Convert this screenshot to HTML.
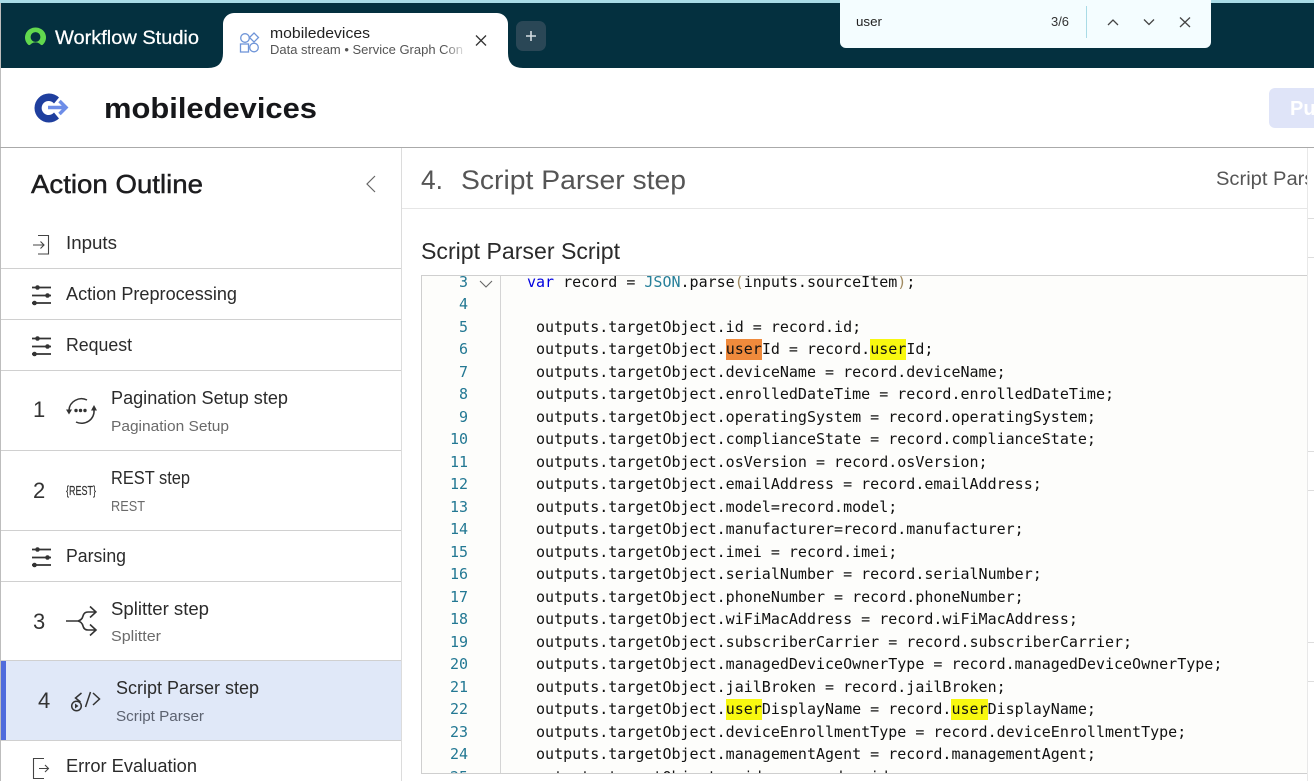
<!DOCTYPE html>
<html><head><meta charset="utf-8"><style>
html,body{margin:0;padding:0;width:1314px;height:781px;overflow:hidden;background:#fff}
.a{position:absolute}
#ed{position:absolute;left:421px;top:275px;width:886px;height:499px;overflow:hidden;background:#fdfdfb;border:1px solid #cfcfcf;border-width:1px 0 1px 1px;box-sizing:border-box}
#gut{position:absolute;left:78px;top:0;width:1px;height:100%;background:#d4d4d4}
pre{position:absolute;margin:0;font:15px/22.48px "DejaVu Sans Mono","Liberation Mono",monospace;top:-5px}
#nums{left:0;width:46px;text-align:right;color:#237893}
#code{left:105px;color:#111}
#code b{font-weight:normal;display:inline-block;height:21px;line-height:21px;background:#f8f810;vertical-align:top;margin-top:.7px}
#code b.o{background:#ef8a3c}
svg text{font-family:"Liberation Sans",Arial,sans-serif;white-space:pre}
</style></head><body>
<div class="a" style="left:0;top:0;width:1314px;height:68px;background:#04303f"></div>
<div class="a" style="left:0;top:0;width:1314px;height:3px;background:#a9dbe6"></div>
<div class="a" style="left:0;top:3px;width:1px;height:778px;background:#bdbdbd"></div>
<div class="a" style="left:223px;top:13px;width:285px;height:55px;background:#fff;border-radius:11px 11px 0 0"></div>
<div class="a" style="left:516px;top:21px;width:30px;height:30px;background:#2a4756;border-radius:7px"></div>
<div class="a" style="left:1269px;top:88px;width:45px;height:40px;background:#dfe4f8;border-radius:6px 0 0 6px"></div>
<div class="a" style="left:0;top:147px;width:1314px;height:1px;background:#aaa"></div>
<div class="a" style="left:401px;top:148px;width:1px;height:633px;background:#dcdcdc"></div>
<div class="a" style="left:402px;top:208px;width:905px;height:1px;background:#e6e6e6"></div>
<div class="a" style="left:1307px;top:148px;width:1px;height:633px;background:#e8e8e8"></div>
<div class="a" style="left:1px;top:661px;width:400px;height:79px;background:#e0e8f8"></div>
<div class="a" style="left:1px;top:661px;width:5px;height:79px;background:#4f6bdc"></div>
<div class="a" style="left:1px;top:268px;width:400px;height:1px;background:#d0d0d0"></div>
<div class="a" style="left:1px;top:319px;width:400px;height:1px;background:#d0d0d0"></div>
<div class="a" style="left:1px;top:370px;width:400px;height:1px;background:#d0d0d0"></div>
<div class="a" style="left:1px;top:450px;width:400px;height:1px;background:#d0d0d0"></div>
<div class="a" style="left:1px;top:530px;width:400px;height:1px;background:#d0d0d0"></div>
<div class="a" style="left:1px;top:581px;width:400px;height:1px;background:#d0d0d0"></div>
<div class="a" style="left:1px;top:660px;width:400px;height:1px;background:#d0d0d0"></div>
<div class="a" style="left:1px;top:740px;width:400px;height:1px;background:#d0d0d0"></div>
<div class="a" style="left:1308px;top:218px;width:6px;height:1px;background:#ddd"></div>
<div class="a" style="left:1308px;top:257px;width:6px;height:1px;background:#ddd"></div>
<div class="a" style="left:1308px;top:451px;width:6px;height:1px;background:#ddd"></div>
<div class="a" style="left:1308px;top:490px;width:6px;height:1px;background:#ddd"></div>
<div class="a" style="left:1308px;top:642px;width:6px;height:1px;background:#ddd"></div>
<div class="a" style="left:1308px;top:681px;width:6px;height:1px;background:#ddd"></div>

<div id="ed"><div id="gut"></div>
<pre id="nums">3
4
5
6
7
8
9
10
11
12
13
14
15
16
17
18
19
20
21
22
23
24
25</pre>
<pre id="code"><span style="color:#0000e0">var</span> record = <span style="color:#267f99">JSON</span>.parse<span style="color:#a08a60">(</span>inputs.sourceItem<span style="color:#a08a60">)</span>;

 outputs.targetObject.id = record.id;
 outputs.targetObject.<b class="o">user</b>Id = record.<b>user</b>Id;
 outputs.targetObject.deviceName = record.deviceName;
 outputs.targetObject.enrolledDateTime = record.enrolledDateTime;
 outputs.targetObject.operatingSystem = record.operatingSystem;
 outputs.targetObject.complianceState = record.complianceState;
 outputs.targetObject.osVersion = record.osVersion;
 outputs.targetObject.emailAddress = record.emailAddress;
 outputs.targetObject.model=record.model;
 outputs.targetObject.manufacturer=record.manufacturer;
 outputs.targetObject.imei = record.imei;
 outputs.targetObject.serialNumber = record.serialNumber;
 outputs.targetObject.phoneNumber = record.phoneNumber;
 outputs.targetObject.wiFiMacAddress = record.wiFiMacAddress;
 outputs.targetObject.subscriberCarrier = record.subscriberCarrier;
 outputs.targetObject.managedDeviceOwnerType = record.managedDeviceOwnerType;
 outputs.targetObject.jailBroken = record.jailBroken;
 outputs.targetObject.<b>user</b>DisplayName = record.<b>user</b>DisplayName;
 outputs.targetObject.deviceEnrollmentType = record.deviceEnrollmentType;
 outputs.targetObject.managementAgent = record.managementAgent;
 outputs.targetObject.maid = record.maid;</pre>
</div>

<svg class="a" style="left:0;top:0" width="1314" height="781" viewBox="0 0 1314 781" xmlns="http://www.w3.org/2000/svg">
<defs><linearGradient id="fd"><stop offset=".9" stop-color="#555"/><stop offset="1" stop-color="#ddd"/></linearGradient></defs>
<!-- header -->
<path d="M35.500 27.500a10.500 10 0 0 1 7.500 17q-1.500 1.500-3-.5a6.500 6 0 0 0-9 0q-1.500 2-3 .5a10.500 10 0 0 1 7.500-17z" fill="#62d84e"/>
<circle cx="35.500" cy="37" r="4.900" fill="#04303f"/>
<text x="55" y="44" font-size="19" fill="#fff" stroke="#fff" stroke-width=".25" textLength="144" lengthAdjust="spacingAndGlyphs">Workflow Studio</text>
<path d="M208 68q15 0 15-15v15zM508 53q0 15 15 15h-15z" fill="#fff"/>
<g fill="none" stroke="#6f95d8" stroke-width="1.300"><circle cx="245" cy="38" r="4.300"/><path d="M254 33l4.500 4.500-4.500 4.500-4.500-4.500z"/><rect x="240.500" y="44" width="8" height="8"/><circle cx="254" cy="47.500" r="4.300"/></g>
<text x="270" y="38" font-size="15" fill="#222" textLength="100" lengthAdjust="spacingAndGlyphs">mobiledevices</text>
<text x="270" y="54" font-size="12.500" fill="url(#fd)" textLength="193" lengthAdjust="spacingAndGlyphs">Data stream • Service Graph Con</text>
<path d="M476 35.500l10 10M486 35.500l-10 10" stroke="#333" stroke-width="1.300" fill="none"/>
<path d="M531 31v10M526 36h10" stroke="#d5dde2" stroke-width="1.600" fill="none"/>
<!-- find bar -->
<path d="M840 0h371v42a6 6 0 0 1-6 6H846a6 6 0 0 1-6-6z" fill="#f4fdff"/>
<rect x="1086" y="6" width="1" height="32" fill="#a9dbe6"/>
<text x="856" y="26" font-size="12.500" fill="#222" textLength="26" lengthAdjust="spacingAndGlyphs">user</text>
<text x="1051" y="26" font-size="12.500" fill="#333" textLength="18" lengthAdjust="spacingAndGlyphs">3/6</text>
<g fill="none" stroke="#444" stroke-width="1.300"><path d="M1108 25l5-5 5 5M1144 19.500l5 5 5-5M1180 17.500l10 9.500M1190 17.500l-10 9.500"/></g>
<!-- title -->
<path d="M59 97.500a14.500 14.500 0 1 0 0 21l-5-6a7 7 0 1 1 0-9z" fill="#1f3f9e"/>
<path d="M48 104.500h11v-5l11 8-11 8v-5H48a3.500 3.500 0 0 1 0-6z" fill="#fff"/>
<path d="M48 107.500h18M59.500 101l6.500 6.500-6.500 6.500" fill="none" stroke="#6d8de8" stroke-width="3.500"/>
<text x="104" y="118" font-size="29" font-weight="700" fill="#16171a" textLength="213" lengthAdjust="spacingAndGlyphs">mobiledevices</text>
<text x="1290" y="115" font-size="20" font-weight="700" fill="#fff">Pu</text>
<!-- sidebar -->
<text x="31" y="193" font-size="26" fill="#1d1d1f" stroke="#1d1d1f" stroke-width=".45" textLength="172" lengthAdjust="spacingAndGlyphs">Action Outline</text>
<path d="M375 176l-8 8 8 8" fill="none" stroke="#666" stroke-width="1.200"/>
<g fill="#2b2b2b" font-size="18">
<text x="66" y="249" textLength="51" lengthAdjust="spacingAndGlyphs">Inputs</text>
<text x="66" y="300" textLength="171" lengthAdjust="spacingAndGlyphs">Action Preprocessing</text>
<text x="66" y="351" textLength="66" lengthAdjust="spacingAndGlyphs">Request</text>
<text x="111" y="404" textLength="177" lengthAdjust="spacingAndGlyphs">Pagination Setup step</text>
<text x="111" y="484" textLength="79" lengthAdjust="spacingAndGlyphs">REST step</text>
<text x="66" y="562" textLength="60" lengthAdjust="spacingAndGlyphs">Parsing</text>
<text x="111" y="615" textLength="98" lengthAdjust="spacingAndGlyphs">Splitter step</text>
<text x="116" y="694" textLength="143" lengthAdjust="spacingAndGlyphs">Script Parser step</text>
<text x="66" y="772" textLength="131" lengthAdjust="spacingAndGlyphs">Error Evaluation</text>
</g>
<g fill="#6a6a6a" font-size="15">
<text x="111" y="431" textLength="118" lengthAdjust="spacingAndGlyphs">Pagination Setup</text>
<text x="111" y="511" textLength="34" lengthAdjust="spacingAndGlyphs">REST</text>
<text x="111" y="641" textLength="50" lengthAdjust="spacingAndGlyphs">Splitter</text>
<text x="116" y="721" fill="#5c6270" textLength="88" lengthAdjust="spacingAndGlyphs">Script Parser</text>
</g>
<g fill="#333" font-size="22">
<text x="33" y="417">1</text><text x="33" y="498">2</text><text x="33" y="629">3</text><text x="38" y="708">4</text>
</g>
<!-- sidebar icons -->
<g fill="none" stroke="#444" stroke-width="1.100">
<path d="M33 245h11M40.500 241.500l3.500 3.500-3.500 3.500M38 235.500h10.500v18.500H38"/>
<path d="M44 758.500H33.500v20H44M39 768.500h9M45 765l3.500 3.500-3.500 3.500"/>
</g>
<g fill="none" stroke="#333" stroke-width="1.800">
<path d="M32 287.500h19M32 295.500h19M32 303h19"/><path d="M32 338.500h19M32 346.500h19M32 354h19"/><path d="M32 549.500h19M32 557.500h19M32 565h19"/>
</g>
<g fill="#333">
<circle cx="37.500" cy="287.500" r="2.300"/><circle cx="47.500" cy="295.500" r="2.300"/><circle cx="34.500" cy="303" r="2.300"/>
<circle cx="37.500" cy="338.500" r="2.300"/><circle cx="47.500" cy="346.500" r="2.300"/><circle cx="34.500" cy="354" r="2.300"/>
<circle cx="37.500" cy="549.500" r="2.300"/><circle cx="47.500" cy="557.500" r="2.300"/><circle cx="34.500" cy="565" r="2.300"/>
<circle cx="76" cy="410.500" r="1.700"/><circle cx="80.500" cy="410.500" r="1.700"/><circle cx="85" cy="410.500" r="1.700"/>
<path d="M66 409.500h6l-3 5zM91 410.500h6l-3-5.500z"/>
</g>
<path d="M69 410a12.500 12 0 0 1 18-10M94 410a12.500 12 0 0 1-18 12" fill="none" stroke="#333" stroke-width="1.500"/>
<text x="66" y="495" font-size="13" fill="#333" stroke="#333" stroke-width=".2" textLength="30" lengthAdjust="spacingAndGlyphs">{REST}</text>
<g fill="none" stroke="#333" stroke-width="1.600">
<path d="M66 621h12q4-1 5-5 1-4 5-4h8M78 621q4 1 5 5 1 4 5 4h8M90 606.500l6 5.500-6 5.500M90 624.500l6 5.500-6 5.500"/>
</g>
<g fill="none" stroke="#333" stroke-width="1.500">
<circle cx="76.500" cy="706" r="4.800"/><path d="M81.500 693l-6 5 5 4M90.500 692l-5 15M93 693l6.500 6-6.500 6"/>
</g>
<path d="M75 703.500l3.500 2.500-3.500 2.500z" fill="#333"/>
<!-- content -->
<text x="421" y="189" font-size="27" fill="#555" textLength="22" lengthAdjust="spacingAndGlyphs">4.</text>
<text x="461" y="189" font-size="27" fill="#555" textLength="225" lengthAdjust="spacingAndGlyphs">Script Parser step</text>
<clipPath id="c"><rect x="1200" y="160" width="107" height="40"/></clipPath>
<text x="1216" y="185" font-size="19" fill="#555" clip-path="url(#c)" textLength="160" lengthAdjust="spacingAndGlyphs">Script Parser step</text>
<text x="421" y="259" font-size="23" fill="#2a2a2a" textLength="199" lengthAdjust="spacingAndGlyphs">Script Parser Script</text>
<path d="M480 281l6 6 6-6" fill="none" stroke="#666" stroke-width="1.100"/>
</svg>
</body></html>
